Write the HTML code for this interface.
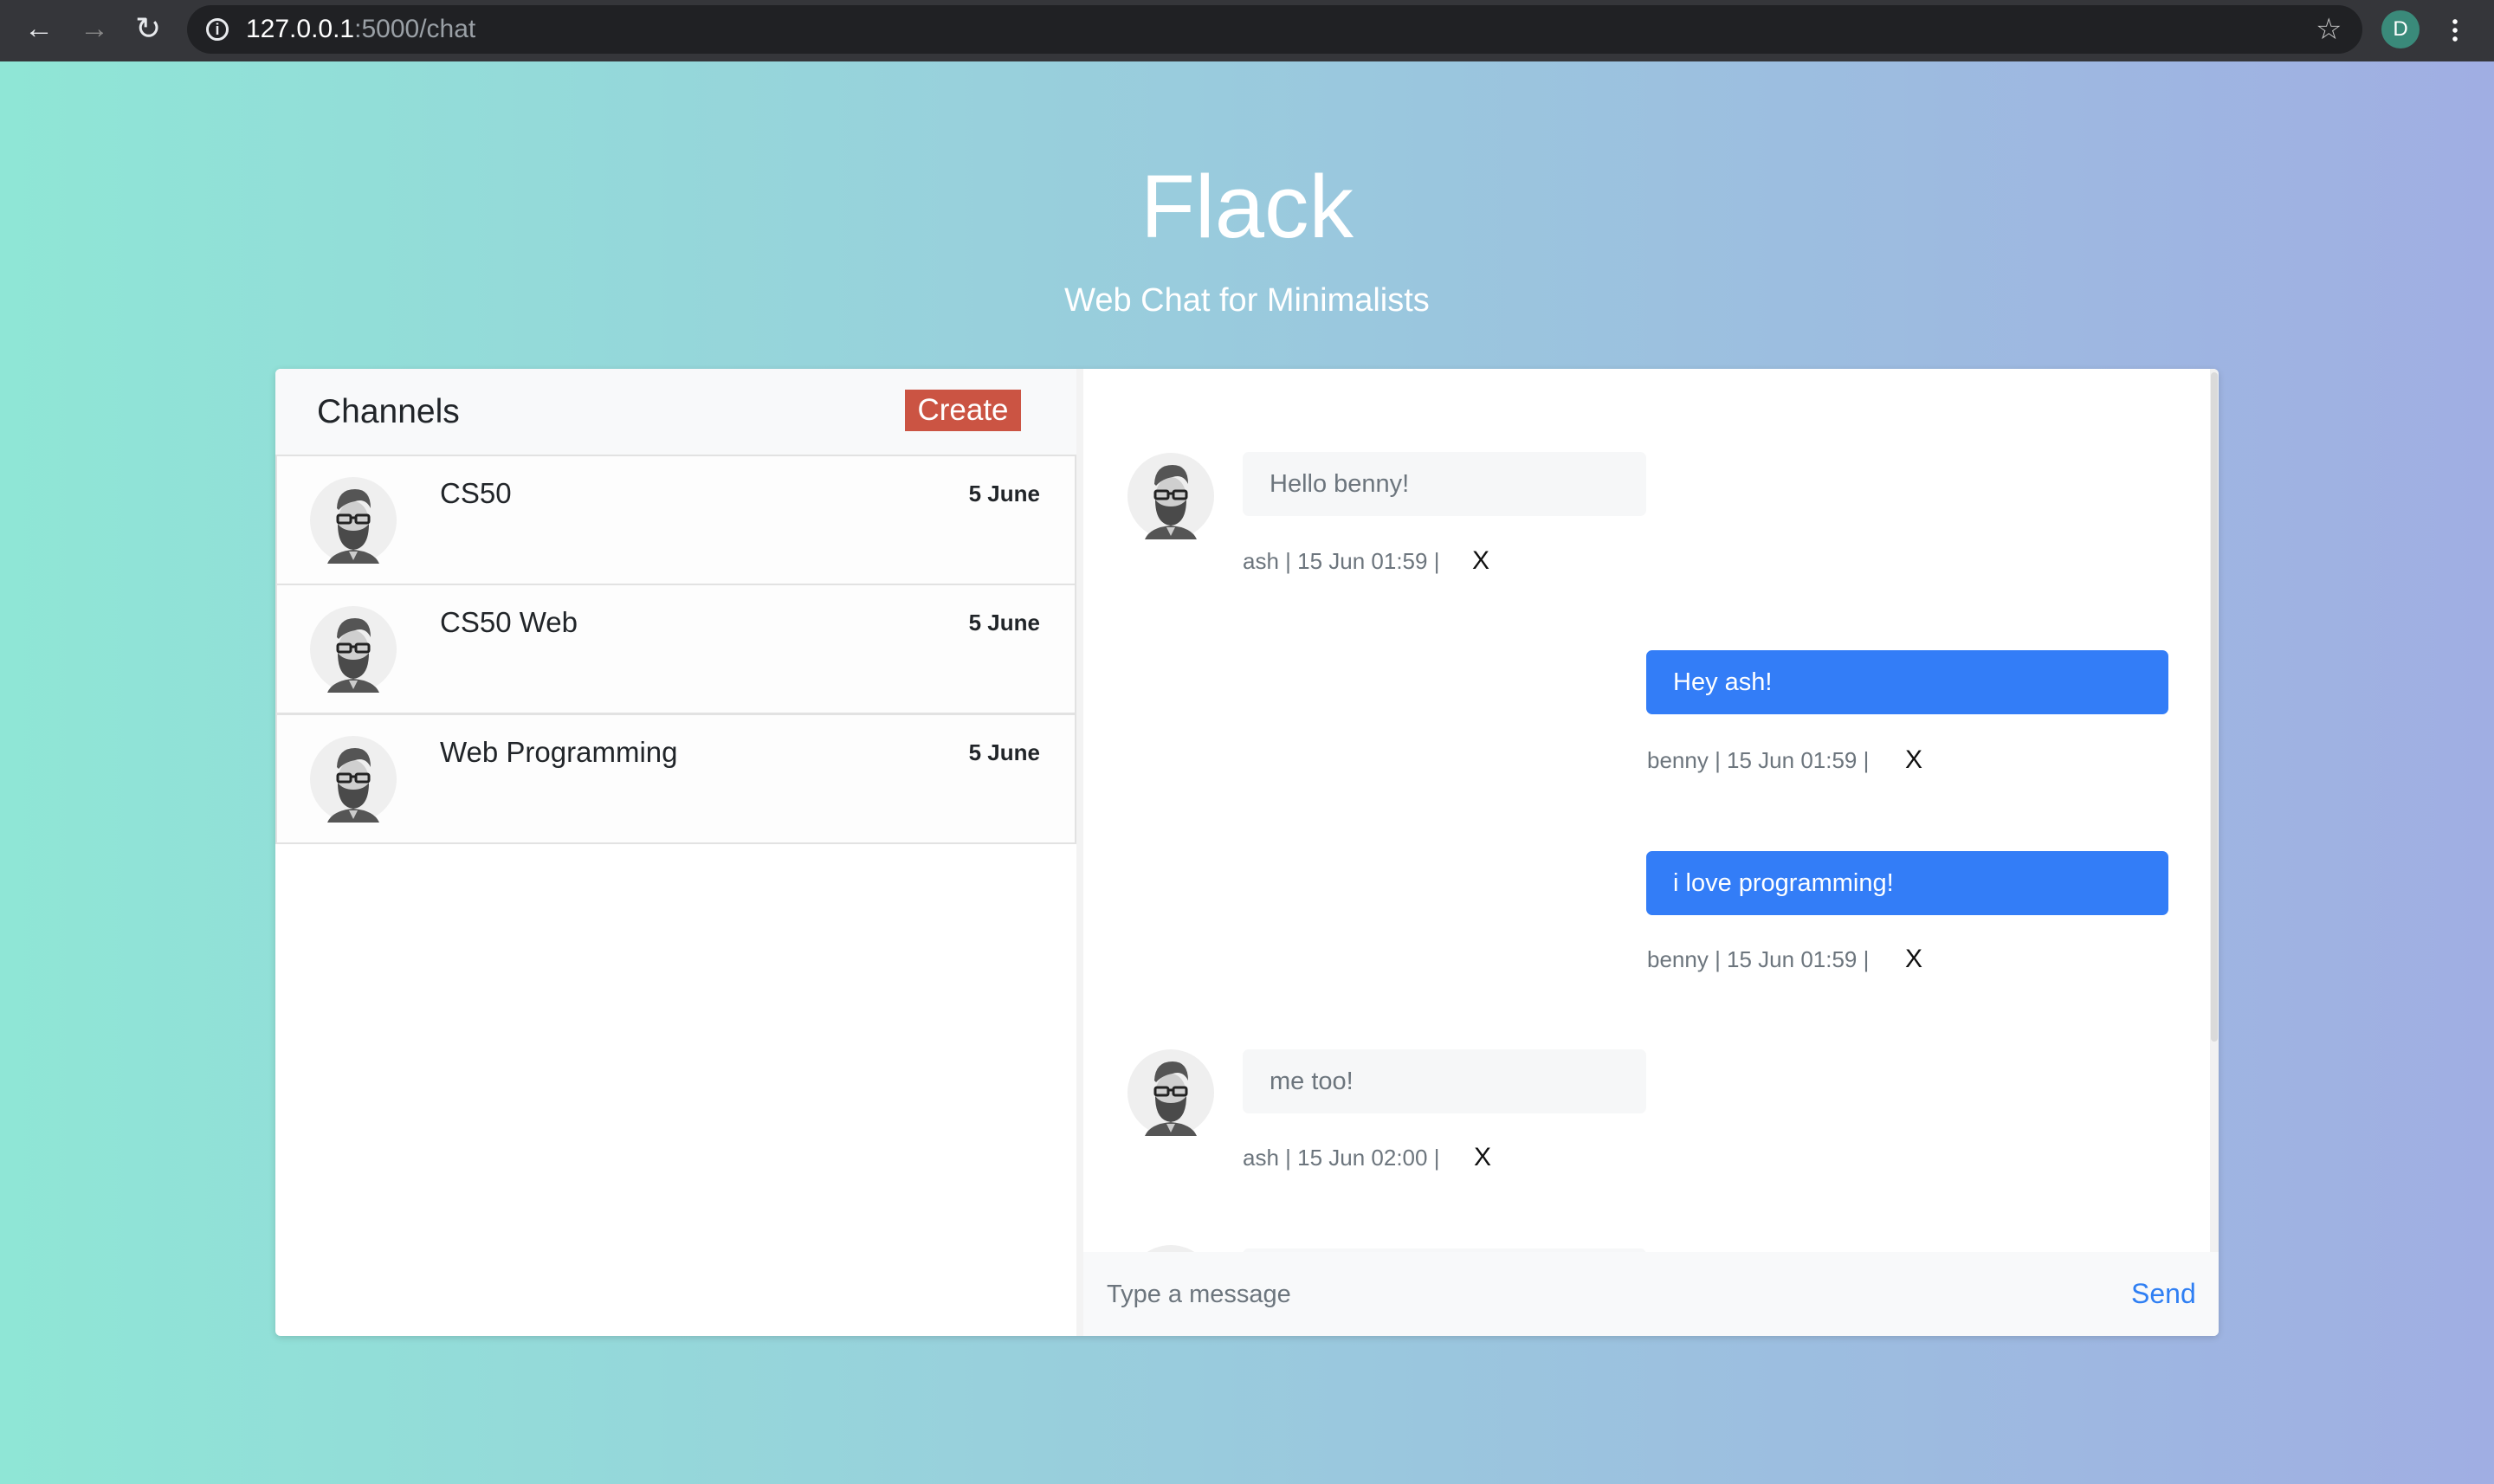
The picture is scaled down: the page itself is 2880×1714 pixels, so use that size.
<!DOCTYPE html>
<html><head><meta charset="utf-8">
<style>
*{box-sizing:border-box;margin:0;padding:0}
body{width:2880px;height:1714px;overflow:hidden;font-family:"Liberation Sans",sans-serif;background:linear-gradient(90deg,#8fe6d6 0%,#98d0dc 40%,#a0aee3 100%);position:relative}
.bar{position:absolute;left:0;top:0;width:2880px;height:71px;background:#35363a}
.url{position:absolute;left:216px;top:6px;width:2512px;height:56px;border-radius:28px;background:#202124}
.abs{position:absolute}
.title{position:absolute;left:0;width:2880px;text-align:center;color:#fff;font-weight:300}
.card{position:absolute;left:318px;top:426px;width:2244px;height:1117px;background:#fff;border-radius:6px;box-shadow:0 2px 8px rgba(0,0,0,.15);overflow:hidden}
.lh{position:absolute;left:0;top:0;width:930px;height:99px;background:#f8f9fa}
.row{position:absolute;left:0;width:925px;height:151px;background:#fdfdfd;border:2px solid #e2e2e2}
.cn{position:absolute;left:188px;top:24px;font-size:33px;color:#212529;font-weight:500}
.dt{position:absolute;right:40px;top:28px;font-size:26px;font-weight:bold;color:#212529}
.av{position:absolute;width:100px;height:100px}
.bub{position:absolute;height:74px;border-radius:7px;font-size:29px;line-height:74px;padding-left:31px}
.g{background:#f6f7f8;color:#6c757d}
.b{background:#337df7;color:#fff}
.meta{position:absolute;font-size:26px;color:#6c757d}
.x{position:absolute;font-size:30px;color:#111}
</style></head><body>
<svg width="0" height="0" style="position:absolute">
<defs><symbol id="a" viewBox="0 0 100 100">
<circle cx="50" cy="50" r="50" fill="#efefef"/>
<path d="M20 100 Q26 86 50 84 Q74 86 80 100Z" fill="#555"/>
<path d="M45 86 L50 96 L55 86Z" fill="#ccc"/>
<ellipse cx="50" cy="52" rx="18" ry="24" fill="#cfcfcf"/>
<path d="M31 36 Q32 14 52 14 Q70 14 70 36 Q64 24 52 28 Q40 30 33 38Z" fill="#555"/>
<path d="M32 54 Q32 82 50 84 Q68 82 68 54 Q62 62 50 62 Q38 62 32 54Z" fill="#4a4a4a"/>
<rect x="32" y="44" width="15" height="9" rx="2" fill="none" stroke="#222" stroke-width="3"/>
<rect x="53" y="44" width="15" height="9" rx="2" fill="none" stroke="#222" stroke-width="3"/>
<path d="M47 47 L53 47" stroke="#222" stroke-width="3"/>
</symbol></defs></svg>

<div class="bar"></div>
<div class="url"></div>
<div class="abs" style="left:28px;top:14px;color:#e8eaed;font-size:34px">&#8592;</div>
<div class="abs" style="left:92px;top:14px;color:#888;font-size:34px">&#8594;</div>
<div class="abs" style="left:156px;top:12px;color:#e8eaed;font-size:36px">&#8635;</div>
<div class="abs" style="left:238px;top:21px;width:26px;height:26px;border:3px solid #e8eaed;border-radius:50%;color:#e8eaed;font-size:18px;text-align:center;line-height:20px;font-weight:bold">i</div>
<div class="abs" style="left:284px;top:17px;font-size:30px;color:#fff">127.0.0.1<span style="color:#9aa0a6">:5000/chat</span></div>
<div class="abs" style="left:2674px;top:14px;font-size:34px;color:#ccc">&#9734;</div>
<div class="abs" style="left:2750px;top:12px;width:44px;height:44px;border-radius:50%;background:#3a8a7a;color:#fff;font-size:24px;text-align:center;line-height:44px">D</div>
<div class="abs" style="left:2832px;top:20px;width:6px;height:30px;background:radial-gradient(circle,#fff 2.5px,transparent 3px) 0 0/6px 10px"></div>

<div class="title" style="top:180px;font-size:103px">Flack</div>
<div class="title" style="top:326px;font-size:38px">Web Chat for Minimalists</div>

<div class="card">
 <div class="lh"></div>
 <div class="abs" style="left:48px;top:28px;font-size:39px;color:#212529">Channels</div>
 <div class="abs" style="left:727px;top:24px;width:134px;height:48px;background:#cb5443;color:#fff;font-size:35px;text-align:center;line-height:48px">Create</div>
 <div class="row" style="top:99px"><svg class="av" style="left:38px;top:24px"><use href="#a"/></svg><div class="cn">CS50</div><div class="dt">5 June</div></div>
 <div class="row" style="top:248px"><svg class="av" style="left:38px;top:24px"><use href="#a"/></svg><div class="cn">CS50 Web</div><div class="dt">5 June</div></div>
 <div class="row" style="top:398px"><svg class="av" style="left:38px;top:24px"><use href="#a"/></svg><div class="cn">Web Programming</div><div class="dt">5 June</div></div>
 <div class="abs" style="left:925px;top:0;width:8px;height:1117px;background:#f3f3f3"></div>

 <svg class="av" style="left:984px;top:97px"><use href="#a"/></svg>
 <div class="bub g" style="left:1117px;top:96px;width:466px">Hello benny!</div>
 <div class="meta" style="left:1117px;top:207px">ash | 15 Jun 01:59 |</div>
 <div class="x" style="left:1382px;top:205px">X</div>

 <div class="bub b" style="left:1583px;top:325px;width:603px">Hey ash!</div>
 <div class="meta" style="left:1584px;top:437px">benny | 15 Jun 01:59 |</div>
 <div class="x" style="left:1882px;top:435px">X</div>

 <div class="bub b" style="left:1583px;top:557px;width:603px">i love programming!</div>
 <div class="meta" style="left:1584px;top:667px">benny | 15 Jun 01:59 |</div>
 <div class="x" style="left:1882px;top:665px">X</div>

 <svg class="av" style="left:984px;top:786px"><use href="#a"/></svg>
 <div class="bub g" style="left:1117px;top:786px;width:466px">me too!</div>
 <div class="meta" style="left:1117px;top:896px">ash | 15 Jun 02:00 |</div>
 <div class="x" style="left:1384px;top:894px">X</div>

 <svg class="av" style="left:984px;top:1012px"><use href="#a"/></svg>
 <div class="bub g" style="left:1117px;top:1016px;width:466px"></div>

 <div class="abs" style="left:933px;top:1020px;width:1311px;height:97px;background:#f8f9fa"></div>
 <div class="abs" style="left:960px;top:1053px;font-size:29px;color:#6c757d">Type a message</div>
 <div class="abs" style="left:2143px;top:1050px;font-size:32px;color:#2f7ff3">Send</div>
 <div class="abs" style="left:2234px;top:0;width:10px;height:1020px;background:#f1f1f1"></div>
 <div class="abs" style="left:2235px;top:4px;width:8px;height:773px;background:#dadada;border-radius:4px"></div>
</div>
</body></html>
